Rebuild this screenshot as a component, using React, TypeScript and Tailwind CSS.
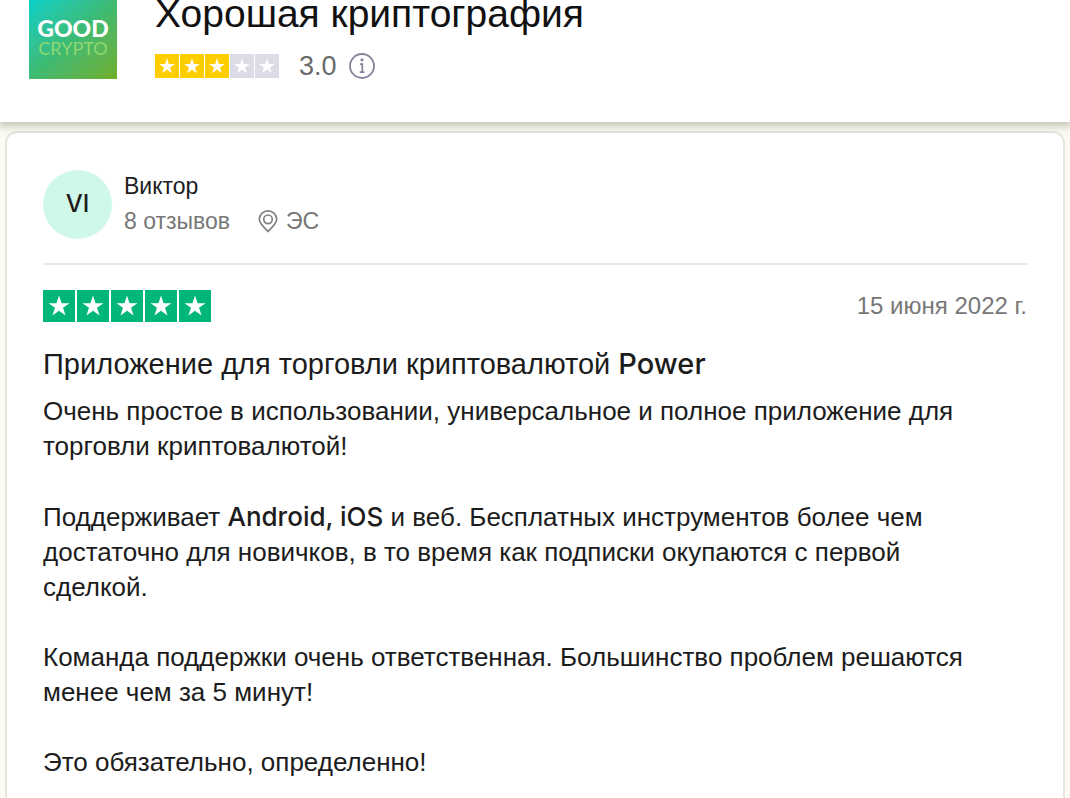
import type { ReactNode } from "react";

const STAR =
  "M12 4.2l1.9 5.7h6l-4.9 3.5 1.9 5.8-4.9-3.6-4.9 3.6L9 13.4 4.1 9.9h6z";

function Stars({
  value,
  className,
  size,
  fill,
}: {
  value: number;
  className: string;
  size: string;
  fill: string;
}) {
  return (
    <div className={`flex ${className}`} role="img" aria-label={`${value} / 5`}>
      {[1, 2, 3, 4, 5].map((n) => (
        <svg
          key={n}
          viewBox="0 0 24 24"
          className={`${size} ${n <= value ? fill : "bg-[#dcdce6]"}`}
        >
          <path d={STAR} fill="#fff" />
        </svg>
      ))}
    </div>
  );
}

function Latin({ children }: { children: ReactNode }) {
  return <span className="font-['Inter',sans-serif] font-medium">{children}</span>;
}

function Logo() {
  return (
    <div className="flex h-[79px] w-[88px] shrink-0 flex-col items-center bg-linear-to-br from-[#00cfc9] via-[#3dba72] to-[#6fae22] pt-[18px] font-['Lato',sans-serif]">
      <span className="text-[23px] leading-5 font-black text-white">GOOD</span>
      <span className="text-lg leading-5 text-[#8fd873]">CRYPTO</span>
    </div>
  );
}

function InfoIcon() {
  return (
    <svg viewBox="0 0 26 26" className="size-[26px]" fill="none" stroke="#85859b">
      <circle cx="13" cy="13" r="12" strokeWidth="1.8" />
      <path d="M11 11.2h2.3v8M10.8 19.2h4.6" strokeWidth="1.8" />
      <circle cx="13" cy="6.8" r="1.6" fill="#85859b" stroke="none" />
    </svg>
  );
}

function PinIcon() {
  return (
    <svg viewBox="0 0 20 24" className="h-6 w-5" fill="none" stroke="#808080" strokeWidth="1.7">
      <path d="M10 21.5C6.5 18 1.3 13.5 1.3 9.3a8.7 8.4 0 0 1 17.4 0c0 4.2-5.2 8.7-8.7 12.2z" />
      <circle cx="10" cy="9.3" r="4.3" />
    </svg>
  );
}

function Header() {
  return (
    <header className="relative flex h-[122px] items-start bg-white pl-[29px] shadow-[0_2px_8px_2px_rgba(90,90,70,0.35)]">
      <Logo />
      <div className="ml-[38px]">
        <h1 className="-mt-2 text-[39px] leading-11 text-[#111]">Хорошая криптография</h1>
        <div className="mt-4 flex items-center">
          <Stars value={3} className="gap-px" size="size-6" fill="bg-[#ffce00]" />
          <span className="ml-5 text-[27px] leading-7 text-[#696a6a]">3.0</span>
          <button type="button" aria-label="Информация" className="ml-3">
            <InfoIcon />
          </button>
        </div>
      </div>
    </header>
  );
}

const body = [
  <>
    Очень простое в использовании, универсальное и полное приложение для
    <br />
    торговли криптовалютой!
  </>,
  <>
    Поддерживает <Latin>Android, iOS</Latin> и веб. Бесплатных инструментов более чем
    <br />
    достаточно для новичков, в то время как подписки окупаются с первой
    <br />
    сделкой.
  </>,
  <>
    Команда поддержки очень ответственная. Большинство проблем решаются
    <br />
    менее чем за 5 минут!
  </>,
  <>Это обязательно, определенно!</>,
];

function Review() {
  return (
    <article className="mx-[5px] rounded-t-xl border-2 border-b-0 border-[#e6e6df] bg-white px-9 pt-9 pb-6">
      <div className="flex items-center gap-3 border-b-2 border-[#e8e8e2] pb-6">
        <div className="flex size-[69px] items-center justify-center rounded-full bg-[#d0f8e8] text-2xl text-[#1c1c1c]">
          <Latin>VI</Latin>
        </div>
        <div className="text-[23px] leading-[35px]">
          <div className="text-[#1c1c1c]">Виктор</div>
          <div className="flex items-center text-[#777]">
            <span>8 отзывов</span>
            <span className="ml-7 flex items-center gap-2">
              <PinIcon />
              ЭС
            </span>
          </div>
        </div>
      </div>

      <div className="mt-[25px] flex items-center justify-between">
        <Stars value={5} className="gap-0.5" size="size-8" fill="bg-[#00b67a]" />
        <time dateTime="2022-06-15" className="text-2xl leading-8 text-[#777]">
          15 июня 2022 г.
        </time>
      </div>

      <h2 className="mt-6 text-[29px] leading-9 text-[#1c1c1c]">
        Приложение для торговли криптовалютой <Latin>Power</Latin>
      </h2>
      <div className="mt-3 space-y-[35px] text-[26px] leading-[35px] text-[#1c1c1c]">
        {body.map((text, i) => (
          <p key={i}>{text}</p>
        ))}
      </div>
    </article>
  );
}

export default function App() {
  return (
    <div className="min-h-screen bg-[#fbfbf3] font-['Liberation_Sans',Arial,sans-serif]">
      <Header />
      <main className="pt-[9px]">
        <Review />
      </main>
    </div>
  );
}
